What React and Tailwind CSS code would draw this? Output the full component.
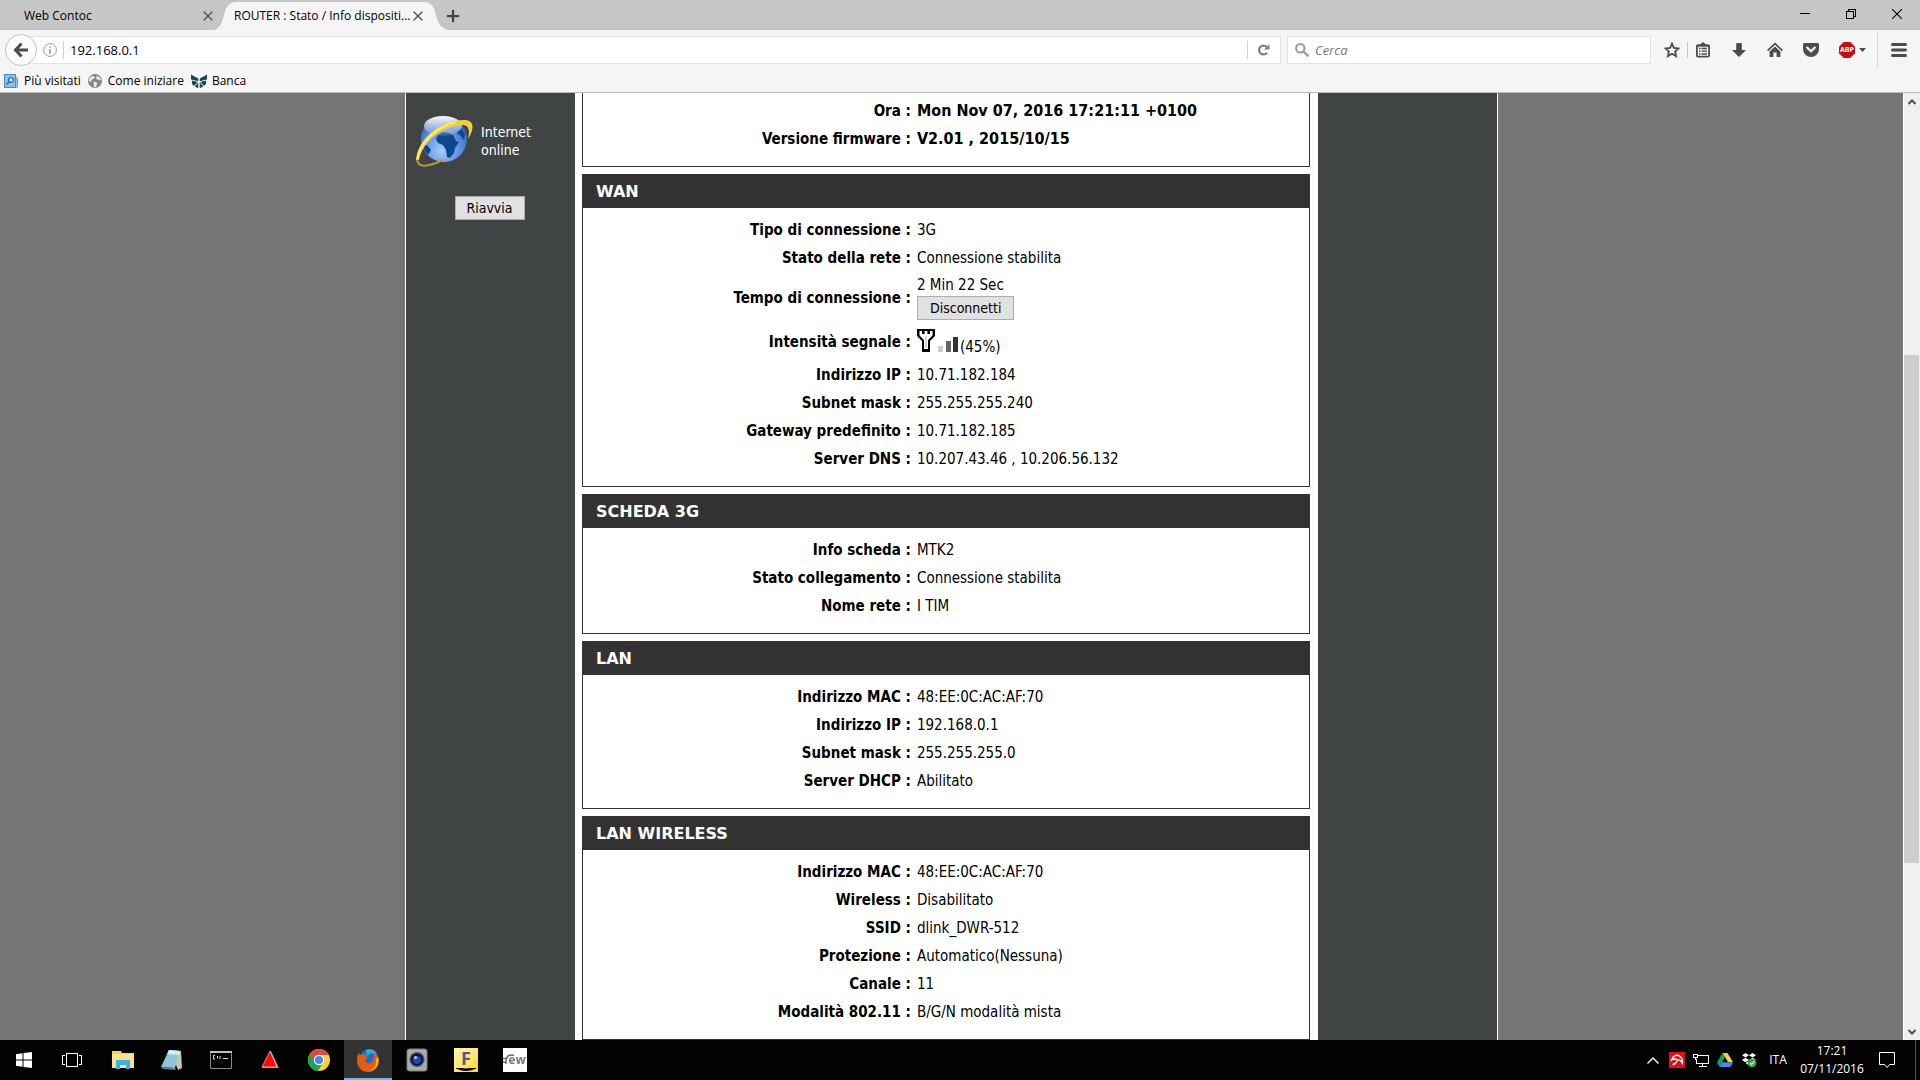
import { useState } from 'react';
import { X, Plus } from 'lucide-react';

const wanRows = [
  { label: 'Tipo di connessione', value: '3G' },
  { label: 'Stato della rete', value: 'Connessione stabilita' },
  { label: 'Tempo di connessione', value: '2 Min 22 Sec', kind: 'time' },
  { label: 'Intensità segnale', value: '(45%)', kind: 'signal' },
  { label: 'Indirizzo IP', value: '10.71.182.184' },
  { label: 'Subnet mask', value: '255.255.255.240' },
  { label: 'Gateway predefinito', value: '10.71.182.185' },
  { label: 'Server DNS', value: '10.207.43.46 , 10.206.56.132' },
];

const cardRows = [
  { label: 'Info scheda', value: 'MTK2' },
  { label: 'Stato collegamento', value: 'Connessione stabilita' },
  { label: 'Nome rete', value: 'I TIM' },
];

const lanRows = [
  { label: 'Indirizzo MAC', value: '48:EE:0C:AC:AF:70' },
  { label: 'Indirizzo IP', value: '192.168.0.1' },
  { label: 'Subnet mask', value: '255.255.255.0' },
  { label: 'Server DHCP', value: 'Abilitato' },
];

const wirelessRows = [
  { label: 'Indirizzo MAC', value: '48:EE:0C:AC:AF:70' },
  { label: 'Wireless', value: 'Disabilitato' },
  { label: 'SSID', value: 'dlink_DWR-512' },
  { label: 'Protezione', value: 'Automatico(Nessuna)' },
  { label: 'Canale', value: '11' },
  { label: 'Modalità 802.11', value: 'B/G/N modalità mista' },
];

const generalRows = [
  { label: 'Ora', value: 'Mon Nov 07, 2016 17:21:11 +0100', kind: 'bold' },
  { label: 'Versione firmware', value: 'V2.01 , 2015/10/15', kind: 'bold' },
];

/* ---------- browser window ---------- */

function TabStrip() {
  return (
    <div className="flex h-[30px] shrink-0 items-stretch bg-[#c6c6c6]">
      <div className="flex w-[213px] items-center justify-between pt-0.5 pl-6">
        <span>Web Contoc</span>
        <button type="button" aria-label="Chiudi scheda" className="flex w-[11px] items-center justify-center text-[#555]">
          <X className="h-4 w-4 shrink-0" strokeWidth={2} />
        </button>
      </div>
      <div className="relative flex w-[236px] items-center justify-between pt-0.5 pr-[26px] pl-[21px]">
        <svg className="absolute inset-y-0 left-0 h-full w-full" viewBox="0 0 236 30" preserveAspectRatio="none" fill="#f5f5f5">
          <path d="M0 30 C7 29 9 23 11 15 C13 7 16 2 24 2 H210 C219 2 221 7 223 15 C225 23 228 29 236 30 Z" />
        </svg>
        <span className="relative whitespace-nowrap">ROUTER : Stato / Info dispositi...</span>
        <button type="button" aria-label="Chiudi scheda" className="relative flex w-[11px] items-center justify-center text-[#555]">
          <X className="h-4 w-4 shrink-0" strokeWidth={2} />
        </button>
      </div>
      <button type="button" aria-label="Nuova scheda" className="-ml-2 flex w-6 items-center justify-center pt-0.5 text-[#444]">
        <Plus className="h-[18px] w-[18px] shrink-0" strokeWidth={3} />
      </button>
      <div className="ml-auto flex pb-0.5">
        <button type="button" aria-label="Riduci a icona" className="flex w-[46px] items-center justify-center">
          <svg className="h-[10px] w-[10px]" viewBox="0 0 10 10" stroke="#000" shapeRendering="crispEdges">
            <path d="M0 4.5h10" />
          </svg>
        </button>
        <button type="button" aria-label="Ripristina" className="flex w-[46px] items-center justify-center">
          <svg className="h-[10px] w-[10px]" viewBox="0 0 10 10" fill="none" stroke="#000" shapeRendering="crispEdges">
            <path d="M0.5 2.5h7v7h-7zM2.5 2.5v-2h7v7h-2" />
          </svg>
        </button>
        <button type="button" aria-label="Chiudi" className="flex w-[46px] items-center justify-center">
          <svg className="h-[10px] w-[10px]" viewBox="0 0 10 10" fill="none" stroke="#000" strokeWidth="1.1">
            <path d="M0 0l10 10M10 0L0 10" />
          </svg>
        </button>
      </div>
    </div>
  );
}

function ToolButton({ label, children }) {
  return (
    <button type="button" aria-label={label} className="flex h-8 w-9 items-center justify-center text-[#4c4c4c]">
      {children}
    </button>
  );
}

function ToolBar() {
  const [url, setUrl] = useState('192.168.0.1');
  const [query, setQuery] = useState('');

  return (
    <div className="flex h-[38px] items-center pt-0.5 pl-[5px]">
      <button
        type="button"
        aria-label="Indietro"
        className="relative z-10 -mr-4 flex h-8 w-8 shrink-0 items-center justify-center rounded-full border border-[#c4c4c4] bg-[#fbfbfb]"
      >
        <svg className="h-4 w-4" viewBox="0 0 16 16" fill="none" stroke="#4c4c4c" strokeWidth="3">
          <path d="M8.5 1.5L2.5 8l6 6.5M3 8h12" />
        </svg>
      </button>
      <div className="flex h-7 flex-1 items-center border border-[#e2e2e2] bg-white pl-[21px]">
        <svg className="h-[14px] w-[14px] shrink-0" viewBox="0 0 14 14" fill="none" stroke="#999">
          <circle cx="7" cy="7" r="6.4" />
          <path d="M7 6v5M7 3.2v1.6" strokeWidth="1.6" />
        </svg>
        <span className="ml-[6px] h-[18px] w-px bg-[#d0d0d0]" />
        <input
          aria-label="Indirizzo"
          value={url}
          onChange={(e) => setUrl(e.target.value)}
          className="h-6 min-w-0 flex-1 px-[6px] text-[13px] outline-none"
        />
        <span className="h-[18px] w-px bg-[#d0d0d0]" />
        <button type="button" aria-label="Ricarica" className="flex h-6 w-8 items-center justify-center">
          <svg className="h-3 w-3" viewBox="0 0 12 12" fill="none">
            <path d="M9 8.6A4.4 4.4 0 1 1 8.6 3" stroke="#808080" strokeWidth="2.2" />
            <path d="M11.5 0v5.5H6z" fill="#808080" />
          </svg>
        </button>
      </div>
      <div className="ml-[6px] flex h-7 w-[364px] items-center border border-[#e2e2e2] bg-white pl-[7px]">
        <svg className="h-[14px] w-[14px] shrink-0" viewBox="0 0 14 14" fill="none" stroke="#999">
          <circle cx="5.3" cy="5.3" r="4.2" strokeWidth="2" />
          <path d="M8.5 8.5l4.8 4.8" strokeWidth="2.4" />
        </svg>
        <input
          aria-label="Cerca"
          placeholder="Cerca"
          value={query}
          onChange={(e) => setQuery(e.target.value)}
          className="h-6 min-w-0 flex-1 px-[6px] text-[13px] outline-none placeholder:text-[#777] placeholder:italic"
        />
      </div>
      <div className="ml-[3px] flex items-center">
        <ToolButton label="Aggiungi ai segnalibri">
          <svg className="h-4 w-4" viewBox="0 0 16 16" fill="none" stroke="currentColor" strokeWidth="1.8">
            <path d="M8 1.6l1.9 4.3 4.7.5-3.5 3.1 1 4.7L8 11.8l-4.1 2.4 1-4.7L1.4 6.4l4.7-.5z" />
          </svg>
        </ToolButton>
        <span className="-mr-[3px] -ml-[3px] h-4 w-px bg-[#c4c4c4]" />
        <ToolButton label="Mostra segnalibri">
          <svg className="h-4 w-4" viewBox="0 0 16 16" fill="none" stroke="currentColor">
            <path d="M5.5 2.5h5L8 .6z" fill="currentColor" />
            <rect x="1.900" y="3.400" width="12.200" height="11.200" rx="1.200" strokeWidth="1.800" />
            <path d="M1.5 3.6h13" strokeWidth="2" />
            <path d="M4 6.5h1.6M6.6 6.5H12M4 9.2h1.6M6.6 9.2H12M4 12h1.6M6.6 12H12" strokeWidth="1.3" />
          </svg>
        </ToolButton>
        <ToolButton label="Download">
          <svg className="h-4 w-4" viewBox="0 0 16 16" fill="currentColor">
            <path d="M5.2 2q0-1 1-1h3.6q1 0 1 1v6H15l-7 7-7-7h4.2z" />
          </svg>
        </ToolButton>
        <ToolButton label="Pagina iniziale">
          <svg className="h-4 w-4" viewBox="0 0 16 16" fill="currentColor">
            <path d="M.6 8.6L8 1.6l7.4 7" fill="none" stroke="currentColor" strokeWidth="1.7" />
            <path d="M8 4.6l5.4 5V15H9.6v-4.4H6.4V15H2.6V9.6z" />
          </svg>
        </ToolButton>
        <ToolButton label="Salva in Pocket">
          <svg className="h-4 w-4" viewBox="0 0 16 16">
            <path d="M1.5 1h13A1.5 1.5 0 0 1 16 2.5V7a8 8 0 0 1-16 0V2.5A1.5 1.5 0 0 1 1.5 1z" fill="#4c4c4c" />
            <path d="M4.2 5.6L8 9.2l3.8-3.6" fill="none" stroke="#f5f5f5" strokeWidth="2.2" strokeLinecap="round" />
          </svg>
        </ToolButton>
        <button type="button" aria-label="Adblock Plus" className="ml-[10px] flex items-center gap-1">
          <span className="relative flex h-4 w-4 items-center justify-center">
            <svg className="absolute inset-0 h-4 w-4" viewBox="0 0 16 16" fill="#c70d0d">
              <path d="M4.7 0h6.6L16 4.7v6.6L11.3 16H4.7L0 11.3V4.7z" />
            </svg>
            <span className="relative text-[7px] leading-4 font-bold text-white">ABP</span>
          </span>
          <svg className="h-1 w-[7px]" viewBox="0 0 7 4" fill="#4c4c4c">
            <path d="M0 0h7L3.5 4z" />
          </svg>
        </button>
        <span className="ml-[11px] h-9 w-px bg-[#d8d8d8]" />
        <button type="button" aria-label="Menu" className="flex h-8 w-[42px] items-center justify-center">
          <svg className="h-[14px] w-4" viewBox="0 0 16 14" stroke="#4c4c4c" strokeWidth="3" strokeLinecap="round">
            <path d="M1.5 1.5h13M1.5 7h13M1.5 12.5h13" />
          </svg>
        </button>
      </div>
    </div>
  );
}

function BookmarksBar() {
  return (
    <nav className="flex h-6 items-center gap-[7px] pt-0.5 pl-1">
      <a href="#piu-visitati" className="flex items-center gap-[6px]">
        <svg className="h-[14px] w-[14px]" viewBox="0 0 14 14">
          <rect x="3.5" y="3.5" width="10" height="10" rx="1" fill="#9dcbea" stroke="#5a9cc5" />
          <rect x=".5" y=".5" width="11" height="13" fill="#8fc3e6" stroke="#4a8dbb" />
          <circle cx="7" cy="6" r="2.4" fill="#cfe8f8" stroke="#2d6f9e" strokeWidth="1.3" />
          <path d="M5.2 7.8l-2.6 2.6" stroke="#2d6f9e" strokeWidth="1.6" />
        </svg>
        Più visitati
      </a>
      <a href="#come-iniziare" className="flex items-center gap-[6px]">
        <svg className="h-[14px] w-[14px]" viewBox="0 0 14 14">
          <circle cx="7" cy="7" r="7" fill="#868686" />
          <path d="M1.5 4L4 2l3 .4-.8 1.8L4 5.6 2.4 8 1 7zM8.5 2.2l2.6.6 2 3-1.6.6-2-1.4-1.4.4zM5.4 7.6l3 .6 1 1.8-1.8 3-1.4.2-.4-2.6z" fill="#ececec" />
        </svg>
        Come iniziare
      </a>
      <a href="#banca" className="flex items-center gap-[5px]">
        <svg className="h-4 w-4" viewBox="0 0 16 16">
          <path fill="#fff" d="M0 0h16v16H0z" />
          <path d="M0 1.500L7.300 5.500V8.200L0 6.500zM16 1.500L8.700 5.500V8.200L16 6.500zM.8 7.500l6 1.500L3 13 1 11zM15.200 7.500l-6 1.500 3.800 4 2-2zM7.300 9.500V15.200L3.600 13.600zM8.700 9.500v5.700l3.700-1.600z" fill="#1d4650" />
        </svg>
        Banca
      </a>
    </nav>
  );
}

function ScrollBar() {
  return (
    <div className="flex w-[17px] shrink-0 flex-col border-l border-white bg-[#f0f0f0]">
      <div className="flex h-[17px] items-center justify-center">
        <svg className="h-[6px] w-2" viewBox="0 0 8 6" fill="none" stroke="#505050" strokeWidth="2">
          <path d="M.5 5L4 1.5 7.5 5" />
        </svg>
      </div>
      <div className="flex-[245]" />
      <div className="mr-px flex-[508] bg-[#cdcdcd]" />
      <div className="flex-[160]" />
      <div className="flex h-[17px] items-center justify-center">
        <svg className="h-[6px] w-2" viewBox="0 0 8 6" fill="none" stroke="#505050" strokeWidth="2">
          <path d="M.5 1L4 4.5 7.5 1" />
        </svg>
      </div>
    </div>
  );
}

/* ---------- router page ---------- */

function SignalIcon() {
  return (
    <svg className="inline-block h-6 w-[43px] align-baseline" viewBox="0 0 43 24">
      <path d="M0 1h18v7l-5 5v11H5V13L0 8z" fill="#000" />
      <path d="M2.5 3H5v3h2.6V3h2.8v3H13V3h2.5v4.4L11 12v9H7v-9L2.5 7.4z" fill="#fff" />
      <path d="M8.6 8h.8v12h-.8z" fill="#999" />
      <path d="M21 18h5v6h-5z" fill="#ccc" />
      <path d="M29 13h5v11h-5z" fill="#666" />
      <path d="M36 9h5v15h-5z" fill="#333" />
    </svg>
  );
}

function InfoRow({ row }) {
  let height = 'h-7';
  if (row.kind === 'time') height = 'h-[51px]';
  if (row.kind === 'signal') height = 'h-[38px]';

  return (
    <tr className={height}>
      <th scope="row" className="w-[46%] p-0 pr-[6px] text-right font-bold">
        {row.label} :
      </th>
      <td className={`p-0 ${row.kind === 'bold' ? 'text-base leading-5 font-bold' : ''}`}>
        {row.kind === 'signal' && <SignalIcon />}
        {row.value}
        {row.kind === 'time' && (
          <button
            type="button"
            className="mt-px block h-6 border border-[#adadad] bg-[#e1e1e1] px-3 text-sm leading-5"
          >
            Disconnetti
          </button>
        )}
      </td>
    </tr>
  );
}

function InfoPanel({ title, rows }) {
  return (
    <section className={`border-b border-[#333] ${title ? '' : 'border-x pt-1'}`}>
      {title && (
        <h2 className="flex h-[34px] items-center bg-[#333] pt-0.5 pl-[14px] font-[DejaVu_Sans,sans-serif] text-base font-bold text-white">
          {title}
        </h2>
      )}
      <div className={title ? 'border-x border-[#333] pt-2 pb-[13px]' : 'pb-[13px]'}>
        <table className="w-full table-fixed border-collapse text-[15px] leading-5">
          <tbody>
            {rows.map((row) => (
              <InfoRow key={row.label} row={row} />
            ))}
          </tbody>
        </table>
      </div>
    </section>
  );
}

function Globe() {
  return (
    <svg className="h-[54px] w-[60px] shrink-0" viewBox="0 0 60 54">
      <defs>
        <radialGradient id="sea" cx="45%" cy="75%" r="75%">
          <stop offset="0" stopColor="#a9ccff" />
          <stop offset="0.55" stopColor="#5a8de0" />
          <stop offset="1" stopColor="#2a57a8" />
        </radialGradient>
        <linearGradient id="shine" x1="0" y1="0" x2="0" y2="1">
          <stop offset="0" stopColor="#fff" />
          <stop offset="1" stopColor="#fff" stopOpacity="0.1" />
        </linearGradient>
      </defs>
      <circle cx="30" cy="25" r="23" fill="url(#sea)" />
      <path d="M24 21l5-3 6 1 4 2 3 6 3 1-4 6-1 5-4 5-3-1-1-7-3-5-5-2-2-4z" fill="#0d468f" />
      <path d="M9 30l5 2 3 4-3 5c-3-3-5-7-5-11zM47 14l4 6-1 6-4-5-4-3z" fill="#0d468f" />
      <ellipse cx="29" cy="12" rx="19" ry="10" fill="url(#shine)" />
      {/* ring, thick in front and thin where it turns behind */}
      <path d="M3 44c0 7 5 9 12 7 6-1 10-3 14-5" fill="none" stroke="#b39a35" strokeWidth="2" />
      <path d="M2 46C4 24 27 6 50 6c10 0 11 8 4 19 2-9 1-14-6-14C30 12 9 26 5 46z" fill="#f2cf3e" />
      <path d="M3.500 45c2-17 19-32 38-37" fill="none" stroke="#ffe873" strokeWidth="2" />
    </svg>
  );
}

function RouterPage() {
  return (
    <div className="flex min-w-0 flex-1 justify-center overflow-hidden bg-[#757575] font-[DejaVu_Sans_Condensed,DejaVu_Sans,sans-serif]">
      <div className="flex w-[1093px] shrink-0 border-x border-white bg-[#404444]">
        <aside className="w-[169px] shrink-0 pt-[21px] pr-0.5">
          <div className="flex items-center gap-[7px] pl-2 text-sm leading-[18px] text-white">
            <Globe />
            <p>
              Internet
              <br />
              online
            </p>
          </div>
          <div className="mt-7 text-center">
            <button type="button" className="h-6 w-[70px] border border-[#adadad] bg-[#e1e1e1] text-sm leading-5">
              Riavvia
            </button>
          </div>
        </aside>
        <main className="flex min-w-0 flex-1 flex-col gap-[7px] bg-white pr-2 pl-[7px]">
          <InfoPanel rows={generalRows} />
          <InfoPanel title="WAN" rows={wanRows} />
          <InfoPanel title="SCHEDA 3G" rows={cardRows} />
          <InfoPanel title="LAN" rows={lanRows} />
          <InfoPanel title="LAN WIRELESS" rows={wirelessRows} />
        </main>
        <div className="w-[179px] shrink-0" />
      </div>
    </div>
  );
}

/* ---------- taskbar ---------- */

const apps = [
  {
    name: 'Esplora file',
    icon: (
      <svg className="h-6 w-6" viewBox="0 0 24 24">
        <path d="M1 3h9l1 2h12v15H1z" fill="#f3cf5f" />
        <path d="M1 6h22v14H1z" fill="#fde293" />
        <path d="M5 21v-9h14v9h-4v-4H9v4z" fill="#3bb1e8" />
      </svg>
    ),
  },
  {
    name: 'Blocco note',
    icon: (
      <svg className="h-6 w-6" viewBox="0 0 24 24">
        <path d="M10 2l11 1 1 17-4 2z" fill="#c8c4ba" />
        <path d="M9 2l11 1-5 17-14-1z" fill="#8fc6d8" />
        <path d="M9 2l11 1-1 4-12-1z" fill="#d5edf3" />
        <path d="M1 19l14 1 1 2-13-1z" fill="#5b8796" />
      </svg>
    ),
  },
  {
    name: 'Prompt dei comandi',
    icon: (
      <svg className="h-6 w-6" viewBox="0 0 24 24">
        <path d="M1.5 3.5h21v17h-21z" fill="#050505" stroke="#888" />
        <path d="M1 3h22v2H1z" fill="#b9c2ca" />
        <path d="M6 7.5H4.5v3.5H6M8.5 8v2.5M11 8v3M14 10.5h5" stroke="#ddd" fill="none" />
      </svg>
    ),
  },
  {
    name: 'Monitor',
    icon: (
      <svg className="h-6 w-6" viewBox="0 0 24 24">
        <path d="M13 3l8 17H4z" fill="#8a8f8f" />
        <path d="M12 3l7 16H4z" fill="#fb0a00" stroke="#eee" strokeWidth=".6" />
      </svg>
    ),
  },
  {
    name: 'Chrome',
    icon: (
      <svg className="h-6 w-6" viewBox="0 0 24 24">
        <circle cx="12" cy="12" r="11" fill="#fdd03b" />
        <path d="M12 12L2.5 6.5A11 11 0 0 0 11 23l5-8.5z" fill="#1aa260" />
        <path d="M2.5 6.5A11 11 0 0 1 21.8 7H12l-4.500 7.500z" fill="#dd4b3e" />
        <circle cx="12" cy="12" r="5.2" fill="#fff" />
        <circle cx="12" cy="12" r="4.1" fill="#4a86f0" />
      </svg>
    ),
  },
  {
    name: 'Firefox',
    active: true,
    icon: (
      <svg className="h-6 w-6" viewBox="0 0 24 24">
        <circle cx="13" cy="10.5" r="9.5" fill="#1d6fb8" />
        <path d="M10 2c5-2 9 0 11 4l-6-1-4 3z" fill="#36a9e0" />
        <path d="M3 4c0 3 1 3 3 3l4-1c-1 2 0 3 2 3-1 2-3 2-3 4 1 3 6 3 8 0 2-4 0-7-1-9 5 2 7 6 7 9a11 11 0 0 1-22 0c0-4 1-7 2-9z" fill="#e55b15" />
        <path d="M22 9c2 8-3 14-10 14 6-1 9-6 8-12z" fill="#fbb72a" />
      </svg>
    ),
  },
  {
    name: 'Fotocamera',
    icon: (
      <svg className="h-6 w-6" viewBox="0 0 24 24">
        <rect x="2" y="1" width="20" height="22" rx="2.5" fill="#a9aaac" stroke="#7e8084" />
        <circle cx="12" cy="11.500" r="7.500" fill="#4a4c58" />
        <circle cx="12" cy="11.500" r="6" fill="#0d1238" />
        <circle cx="12" cy="12" r="4" fill="#2748b8" />
        <circle cx="10.5" cy="9.5" r="1.6" fill="#a9c2ff" />
      </svg>
    ),
  },
  {
    name: 'Editor F',
    icon: (
      <span className="relative flex h-6 w-6 items-start justify-center bg-gradient-to-br from-[#fff7b0] to-[#ffd800] text-lg leading-5 font-bold text-[#5d548a]">
        F
        <svg className="absolute bottom-0 left-0 h-1 w-6" viewBox="0 0 24 4">
          <path d="M2 0q10 5 20 0-10 2-20 0z" fill="#000" stroke="#000" />
        </svg>
      </span>
    ),
  },
  {
    name: 'EW',
    icon: (
      <span className="relative flex h-6 w-6 items-center justify-center bg-white text-xs font-bold text-[#777]">
        <svg className="absolute top-[6px] left-0 h-3 w-3" viewBox="0 0 12 12" fill="none" stroke="#666" strokeWidth="1.5">
          <path d="M11 1.500C6-.5 2 3 3 10M0 4.500h3M0 8h3" />
        </svg>
        <span className="relative pl-1">ew</span>
      </span>
    ),
  },
];

function TrayIcons() {
  return (
    <div className="flex items-center">
      <button type="button" aria-label="Mostra icone nascoste" className="flex h-10 w-6 items-center justify-center">
        <svg className="h-[7px] w-3" viewBox="0 0 12 7" fill="none" stroke="#fff" strokeWidth="1.3">
          <path d="M.5 6.5L6 1l5.5 5.5" />
        </svg>
      </button>
      <button type="button" aria-label="Antivirus" className="flex h-10 w-6 items-center justify-center">
        <svg className="h-4 w-4" viewBox="0 0 16 16">
          <path fill="#e01018" d="M0 0h16v16H0z" />
          <path
            d="M2.500 8C4 3.500 8 2 11 4.500c2 1.700 2.800 4 2.300 6.500C12 8.500 10.500 7.500 8.500 8 6.500 6.500 4.500 6.800 2.500 8zM8.500 8c-1 2.500-2.500 4.500-5 4.500"
            fill="none"
            stroke="#fff"
            strokeWidth="1.4"
          />
        </svg>
      </button>
      <button type="button" aria-label="Rete" className="flex h-10 w-6 items-center justify-center">
        <svg className="h-4 w-4" viewBox="0 0 16 16" fill="none" stroke="#fff" shapeRendering="crispEdges">
          <path d="M5 3.5h10.5v8h-12V7M9.5 12v2.5M5.5 14.5h8" />
          <path d="M.5 2.5h4v3h-4zM2.5 5.5v2" />
        </svg>
      </button>
      <button type="button" aria-label="Google Drive" className="flex h-10 w-6 items-center justify-center">
        <svg className="h-4 w-4" viewBox="0 0 16 16">
          <path d="M5.5 1h5L16 10h-5z" fill="#fdcf3f" />
          <path d="M5.5 1L8 5.3 2.6 15 0 10.5z" fill="#18a05f" />
          <path d="M5.2 10.3H16L13.4 15H2.6z" fill="#4a86f0" />
        </svg>
      </button>
      <button type="button" aria-label="Dropbox" className="flex h-10 w-6 items-center justify-center">
        <svg className="h-4 w-4" viewBox="0 0 16 16">
          <path d="M4.5 1L8 3.2 4.5 5.5 1 3.2zM11.5 1L15 3.2l-3.5 2.300L8 3.2zM4.5 5.7L8 8l-3.5 2.2L1 8zM11.5 5.7L15 8l-3.5 2.2L8 8zM4.5 11L8 9l3 2-3 2.5z" fill="#fff" />
          <circle cx="11" cy="11" r="4.3" fill="#39a935" />
          <path d="M9 11l1.5 1.6L13 9.6" fill="none" stroke="#fff" strokeWidth="1.3" />
        </svg>
      </button>
    </div>
  );
}

function Taskbar() {
  return (
    <footer className="flex h-10 shrink-0 items-center bg-[#030402] text-white">
      <button type="button" aria-label="Start" className="flex h-10 w-12 items-center justify-center">
        <svg className="h-4 w-4" viewBox="0 0 16 16" fill="#fff">
          <path d="M0 2.2L6.5 1.3V7.5H0zM7.5 1.1L16 0v7.5H7.5zM0 8.5h6.5v6.2L0 13.8zM7.5 8.5H16V16l-8.5-1.1z" />
        </svg>
      </button>
      <button type="button" aria-label="Visualizzazione attività" className="flex h-10 w-12 items-center justify-center">
        <svg className="h-[14px] w-5" viewBox="0 0 20 14" fill="none" stroke="#fff" shapeRendering="crispEdges">
          <path d="M4.5.5h11v13h-11zM3 2.5H.5v9H3M17 2.5h2.5v9H17" />
        </svg>
      </button>
      <div className="ml-[3px] flex gap-px">
        {apps.map((app) => (
          <button
            key={app.name}
            type="button"
            aria-label={app.name}
            className={`flex h-10 w-12 items-center justify-center border-y-2 border-t-transparent ${
              app.active ? 'border-b-[#76b9ed] bg-[#333]' : 'border-b-transparent'
            }`}
          >
            {app.icon}
          </button>
        ))}
      </div>
      <div className="ml-auto flex h-10 items-center">
        <TrayIcons />
        <button type="button" className="w-[34px] text-center">
          ITA
        </button>
        <button type="button" className="w-[74px] text-center leading-[18px]">
          17:21
          <br />
          07/11/2016
        </button>
        <button type="button" aria-label="Notifiche" className="ml-[9px] flex h-10 w-[18px] items-center justify-center">
          <svg className="h-4 w-4" viewBox="0 0 16 16" fill="none" stroke="#fff">
            <path d="M.5.5h15v12h-5L8 15.5 5.5 12.5h-5z" />
          </svg>
        </button>
        <button type="button" aria-label="Mostra desktop" className="ml-[19px] h-10 w-[5px] border-l border-[#555]" />
      </div>
    </footer>
  );
}

export default function App() {
  return (
    <div className="flex h-screen flex-col overflow-hidden bg-[#f5f5f5] font-[Open_Sans,Noto_Sans,sans-serif] text-xs text-black">
      <TabStrip />
      <header className="shrink-0 border-b border-[#bcbcbc]">
        <ToolBar />
        <BookmarksBar />
      </header>
      <div className="flex min-h-0 flex-1">
        <RouterPage />
        <ScrollBar />
      </div>
      <Taskbar />
    </div>
  );
}
